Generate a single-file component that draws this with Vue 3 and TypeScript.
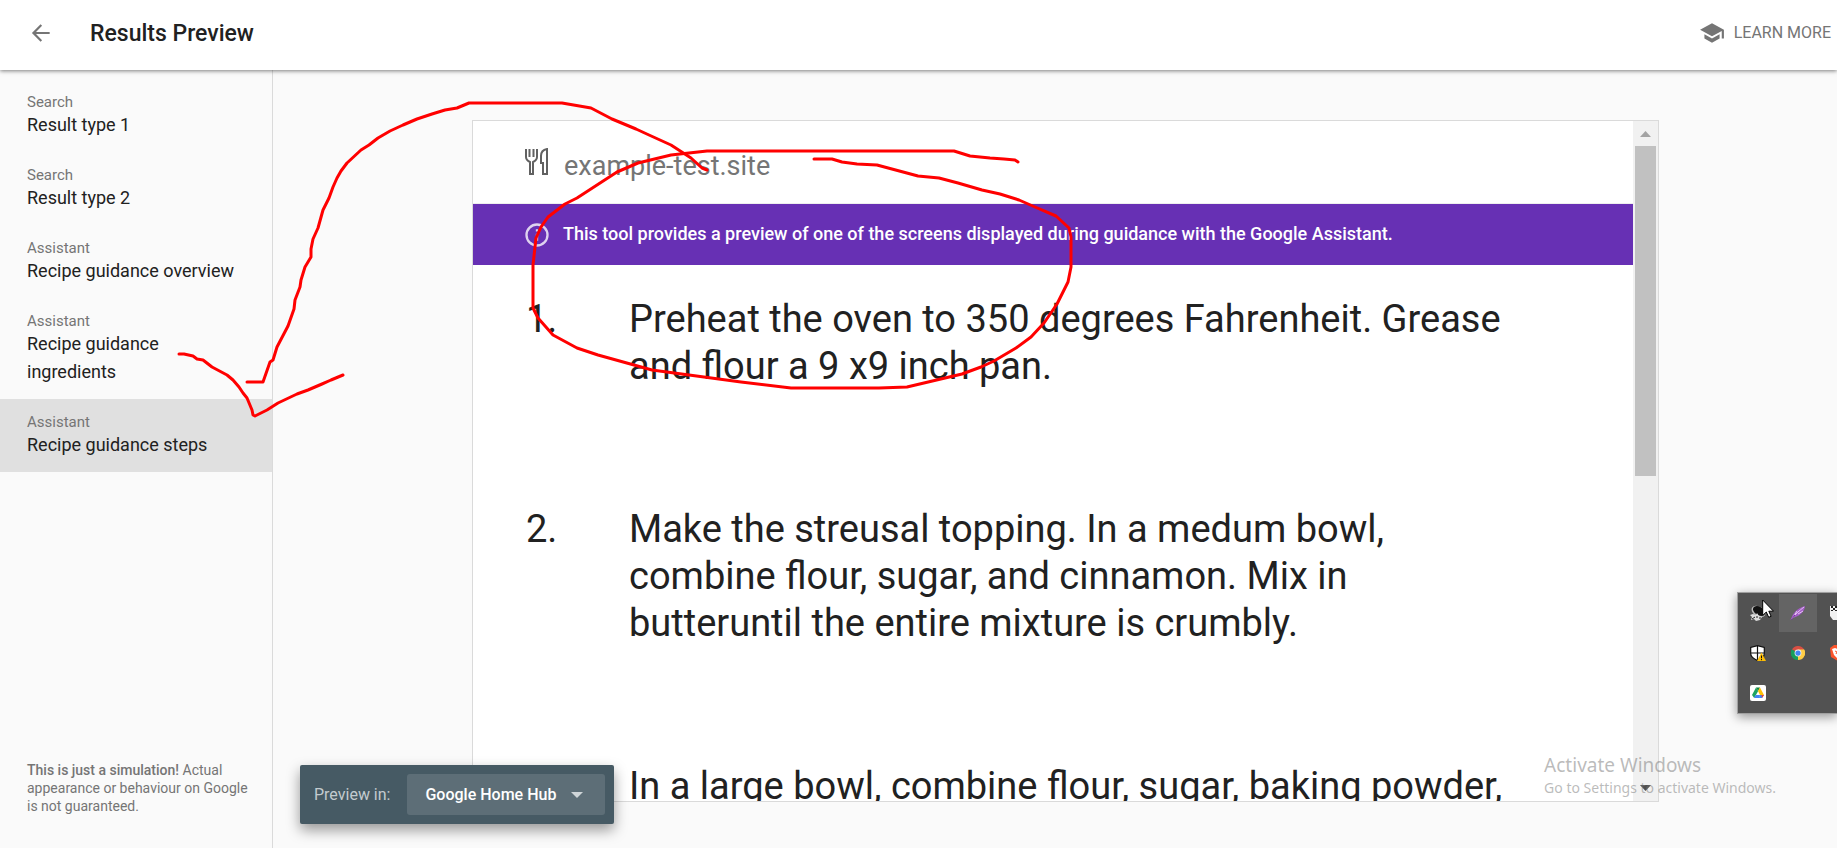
<script setup lang="ts">
import { ref } from 'vue'

interface ResultItem {
  source: string
  title: string
}

const results: ResultItem[] = [
  { source: 'Search', title: 'Result type 1' },
  { source: 'Search', title: 'Result type 2' },
  { source: 'Assistant', title: 'Recipe guidance overview' },
  { source: 'Assistant', title: 'Recipe guidance ingredients' },
  { source: 'Assistant', title: 'Recipe guidance steps' },
]

const selected = ref(4)
const device = ref('Google Home Hub')

const steps: string[] = [
  'Preheat the oven to 350 degrees Fahrenheit. Grease and flour a 9 x9 inch pan.',
  'Make the streusal topping. In a medum bowl, combine flour, sugar, and cinnamon. Mix in butteruntil the entire mixture is crumbly.',
  'In a large bowl, combine flour, sugar, baking powder,',
]

const strokes: string[] = [
  '247,382 263,382 270,362 273,360 277,347 288,326 294,309 295,300 300,287 301,280 305,267 311,257 311,249 313,239 318,228 323,210 329,198 333,187 337,178 341,171 347,163 361,150 369,145 378,138 390,131 403,125 417,119 432,114 445,110 457,108 469,103 562,103 591,108 612,119 636,129 649,135 671,145 691,158 702,168 707,170',
  '179,354 184,354 193,356 197,359 203,360 212,367 227,375 233,380 239,387 243,393 247,398 252,410 253,415 255,416 267,410 278,403 297,394 308,390 322,384 331,380 343,375',
  '814,159 832,159 842,162 857,164 877,165 918,176 939,178 958,183 982,190 1000,194 1019,200 1035,207 1056,216 1069,228 1071,237 1071,267 1068,282 1057,304 1044,323 1031,337 1016,348 994,361 981,367 962,374 907,387 879,388 791,388 741,382 652,370 598,355 577,348 553,335 538,318 533,308 533,265 536,238 541,227 548,217 565,204 577,198 617,172 638,163 671,155 707,151 930,151 954,151 970,156 990,158 1004,159 1015,160 1018,162',
]
</script>

<template>
  <div class="page">
    <header class="topbar">
      <button class="back" type="button" aria-label="Back">
        <svg viewBox="0 0 24 24" width="26" height="26"><path d="M20 11H7.4l5.6-5.6L11.6 4 3.6 12l8 8 1.4-1.4L7.4 13H20z" /></svg>
      </button>
      <h1>Results Preview</h1>
      <a class="learn" href="#">
        <svg viewBox="0 0 24 24" width="26" height="26"><path d="M5 13.18v4L12 21l7-3.82v-4L12 17l-7-3.82zM12 3 1 9l11 6 9-4.91V17h2V9L12 3z" /></svg>
        <span>LEARN MORE</span>
      </a>
    </header>

    <div class="body">
      <aside class="sidebar">
        <nav>
          <button
            v-for="(item, i) in results"
            :key="item.title"
            type="button"
            class="item"
            :class="{ active: i === selected }"
            @click="selected = i"
          >
            <span class="source">{{ item.source }}</span>
            <span class="title">{{ item.title }}</span>
          </button>
        </nav>
        <p class="note"><b>This is just a simulation!</b> Actual appearance or behaviour on Google is not guaranteed.</p>
      </aside>

      <main class="stage">
        <section class="card">
          <div class="content">
            <div class="site">
              <svg class="cutlery" viewBox="0 0 24 28" width="24" height="28">
                <path d="M1 1v8q0 3 4 5v12h3V14q4-2 4-5V1M4.500 1v8M8.500 1v8M22 1v25h-4V15h-2V8q0-6 6-7z" />
              </svg>
              <span>example-test.site</span>
            </div>
            <div class="banner">
              <svg viewBox="0 0 24 24" width="28" height="28"><path d="M11 7h2v2h-2zm0 4h2v6h-2zm1-9a10 10 0 1 0 0 20 10 10 0 0 0 0-20zm0 18a8 8 0 1 1 0-16 8 8 0 0 1 0 16z" /></svg>
              <span>This tool provides a preview of one of the screens displayed during guidance with the Google Assistant.</span>
            </div>
            <ol class="steps">
              <li v-for="(step, i) in steps" :key="i">
                <span class="num">{{ i + 1 }}.</span>
                <span>{{ step }}</span>
              </li>
            </ol>
          </div>
          <div class="scrollbar">
            <svg viewBox="0 0 11 6" width="11" height="6"><path d="M0 6 5.500 0 11 6z" fill="#a3a3a3" /></svg>
            <div class="thumb"></div>
            <svg viewBox="0 0 11 6" width="11" height="6"><path d="M0 0 5.500 6 11 0z" fill="#505050" /></svg>
          </div>
        </section>
      </main>
    </div>

    <div class="device-bar">
      <label for="device">Preview in:</label>
      <div class="picker">
        <select id="device" v-model="device">
          <option>Google Home Hub</option>
        </select>
        <svg viewBox="0 0 12 6" width="12" height="6"><path d="M0 0h12L6 6z" /></svg>
      </div>
    </div>

    <div class="watermark">
      <p class="big">Activate Windows</p>
      <p>Go to Settings to activate Windows.</p>
    </div>

    <svg class="ink" width="1100" height="430" viewBox="0 0 1100 430">
      <polyline v-for="(points, i) in strokes" :key="i" :points="points" />
    </svg>

    <div class="tray">
      <span class="cell">
        <svg viewBox="0 0 16 16" width="16" height="16">
          <ellipse cx="8.500" cy="6.500" rx="7.500" ry="5" transform="rotate(32 8.500 6.500)" fill="#bbb" />
          <ellipse cx="9" cy="6" rx="6.500" ry="4.200" transform="rotate(32 9 6)" fill="#111" />
          <path d="M3 9l3 1 1-2 2 3 3 1-2 3-4 1-2-2-3 1 1-3-2-2z" fill="#ddd" />
          <path d="M2 14l3-2M6 12h2M9 13h2" stroke="#222" />
        </svg>
      </span>
      <span class="cell hover">
        <svg viewBox="0 0 16 16" width="16" height="16">
          <path d="M1 15C2 9 7 3 15 1c0 5-5 10-12 12z" fill="#a45cc8" />
          <path d="M1 15C5 9 9 6 14 2M4 11l3-5M8 9l5-3" stroke="#e3c3f1" fill="none" stroke-width="1" />
          <path d="M1 15l4-5" stroke="#6d2c91" />
        </svg>
      </span>
      <span class="cell">
        <svg viewBox="0 0 16 16" width="16" height="16">
          <path d="M0 1h16v10l-3 4H3l-3-4z" fill="#f1f1f1" />
          <path d="M1 1h2v2H1zM5 1h2v2H5zM3 3h2v2H3zM7 3h2v2H7zM1 5h2v1H1zM5 5h2v1H5z" fill="#222" />
        </svg>
      </span>
      <span class="cell">
        <svg viewBox="0 0 16 16" width="16" height="16">
          <path d="M7.500.7 14.300 2.500v6q0 4-6.800 7-6.800-3-6.800-7v-6z" fill="#fff" stroke="#111" stroke-width="1.200" />
          <path d="M7.500 1v14M1 8h13" stroke="#111" stroke-width="1.200" />
          <path d="M11.500 7.500 16 16H7z" fill="#fbbc05" />
          <path d="M11.500 10.500v2.800M11.500 14v1.200" stroke="#111" />
        </svg>
      </span>
      <span class="cell">
        <svg viewBox="0 0 16 16" width="14" height="14">
          <path d="M8 8 1.070 4A8 8 0 0 1 14.930 4z" fill="#d94f43" />
          <path d="M8 8 8 16A8 8 0 0 1 1.070 4z" fill="#179e5d" />
          <path d="M8 8 14.930 4A8 8 0 0 1 8 16z" fill="#ffcd46" />
          <path d="M8 4h6.930a8 8 0 0 1-3.500 11.200L11.500 10z" fill="#ffcd46" />
          <path d="M1.070 4 4.500 10l3.500 2-2.200 3.700A8 8 0 0 1 1.070 4z" fill="#179e5d" />
          <circle cx="8" cy="8" r="3.900" fill="#f1f1f1" />
          <circle cx="8" cy="8" r="3" fill="#4285f4" />
        </svg>
      </span>
      <span class="cell">
        <svg viewBox="0 0 16 16" width="16" height="16">
          <path d="M4 0h8l4 3-1 9-7 4-7-4L0 3z" fill="#fb542b" />
          <path d="M2 4l3-1 3 1 3-1 3 1-2 6-4 4-4-4z" fill="#fff" />
          <path d="M5 6l2 1-1 2M11 6 9 7l1 2" stroke="#fb542b" fill="none" />
        </svg>
      </span>
      <span class="cell">
        <svg viewBox="0 0 16 16" width="16" height="16">
          <rect width="16" height="16" rx="2" fill="#fff" />
          <path d="M6 2.500 8.200 6 4.200 13 2 10z" fill="#1ea362" />
          <path d="M6 2.500h4L8.200 6z" fill="#11833f" />
          <path d="M10 2.500 14 10h-4L8 6z" fill="#ffc107" />
          <path d="M5.700 10H10l-.5 3H4z" fill="#4285f4" />
          <path d="M10 10h4l-2 3H9z" fill="#4285f4" />
          <path d="M11.500 10H14l-2 3z" fill="#ea4335" />
        </svg>
      </span>
      <svg class="cursor" viewBox="0 0 12 19" width="12" height="19">
        <path d="M.700 1v15.500l3.600-3.500 2.400 5.300 2.400-1-2.300-5.100h4.700z" fill="#fff" stroke="#000" />
      </svg>
    </div>
  </div>
</template>

<style>
body {
  margin: 0;
}
</style>

<style scoped>
.page {
  position: relative;
  display: flex;
  flex-direction: column;
  height: 100vh;
  overflow: hidden;
  background: #fafafa;
  color: #212121;
  font-family: Roboto, "Liberation Sans", sans-serif;
}

.topbar {
  display: flex;
  flex: none;
  align-items: center;
  z-index: 1;
  height: 70px;
  box-sizing: border-box;
  padding: 0 6px 4px 28px;
  background: #fff;
  box-shadow: 0 1px 4px rgba(0, 0, 0, 0.5);
}

.back {
  display: flex;
  padding: 0;
  border: 0;
  background: none;
  fill: #757575;
}

h1 {
  flex: 1;
  margin: 0 0 0 36px;
  font-size: 23px;
  font-weight: 500;
}

.learn {
  display: flex;
  align-items: center;
  gap: 9px;
  color: #757575;
  fill: #757575;
  font-size: 16px;
  text-decoration: none;
}

.learn span {
  padding-bottom: 2px;
}

.body {
  display: flex;
  flex: 1;
  min-height: 0;
}

.sidebar {
  display: flex;
  flex: none;
  flex-direction: column;
  justify-content: space-between;
  width: 272px;
  padding-top: 9px;
  border-right: 1px solid #dadada;
}

.item {
  display: block;
  width: 100%;
  padding: 14px 27px 13px;
  border: 0;
  background: none;
  color: inherit;
  font-family: inherit;
  text-align: left;
}

.item.active {
  background: #e0e0e0;
}

.source {
  display: block;
  color: #757575;
  font-size: 15px;
  line-height: 18px;
}

.title {
  display: block;
  font-size: 18px;
  line-height: 28px;
}

.note {
  margin: 0;
  padding: 0 20px 33px 27px;
  color: #757575;
  font-size: 14px;
  line-height: 18px;
}

.note b {
  font-weight: 500;
}

.stage {
  display: flex;
  flex: 1;
  min-width: 0;
  padding: 50px 178px 46px 199px;
}

.card {
  display: flex;
  flex: 1;
  min-width: 0;
  border: 1px solid #dadada;
  background: #fff;
}

.content {
  flex: 1;
  min-width: 0;
  overflow: hidden;
}

.site {
  display: flex;
  align-items: center;
  gap: 15px;
  height: 82px;
  padding-left: 52px;
  border-bottom: 1px solid #eee;
  color: #757575;
  font-size: 27px;
  line-height: 34px;
}

.site span {
  padding-top: 8px;
}

.cutlery {
  fill: none;
  stroke: #616161;
  stroke-width: 2;
}

.banner {
  display: flex;
  align-items: center;
  gap: 12px;
  height: 61px;
  padding-left: 50px;
  background: #6730b4;
  color: #fff;
  fill: #ded2ef;
  font-size: 18px;
  font-weight: 500;
}

.banner span {
  padding-bottom: 2px;
}

.steps {
  margin: 0;
  padding: 31px 118px 0 53px;
  list-style: none;
  font-size: 38px;
  line-height: 47px;
}

.steps li {
  display: flex;
  margin-bottom: 116px;
}

.num {
  flex: none;
  width: 103px;
}

.scrollbar {
  display: flex;
  flex: none;
  flex-direction: column;
  align-items: center;
  box-sizing: border-box;
  width: 25px;
  padding: 10px 0;
  background: #f1f1f1;
}

.thumb {
  width: 21px;
  height: 50%;
  margin: 9px 0 auto;
  background: #c1c1c1;
}

.device-bar {
  position: absolute;
  z-index: 2;
  left: 300px;
  bottom: 24px;
  display: flex;
  align-items: center;
  gap: 17px;
  padding: 9px 9px 9px 14px;
  border-radius: 2px;
  background: #465a64;
  box-shadow: 0 6px 14px rgba(0, 0, 0, 0.4);
  color: #c3cbcf;
  font-size: 16px;
}

.picker {
  display: flex;
  align-items: center;
  position: relative;
}

.picker svg {
  position: absolute;
  right: 22px;
  fill: #cfd5d8;
  pointer-events: none;
}

select {
  width: 198px;
  height: 41px;
  padding: 0 40px 0 18px;
  border: 0;
  border-radius: 3px;
  appearance: none;
  background: #5d6e77;
  color: #fff;
  font: 500 16px Roboto, sans-serif;
}

.watermark {
  position: absolute;
  z-index: 2;
  right: 61px;
  bottom: 50px;
  color: rgba(120, 120, 120, 0.5);
  font-family: "Noto Sans", "Open Sans", sans-serif;
  font-size: 14px;
  line-height: 20px;
}

.watermark p {
  margin: 0;
}

.watermark .big {
  font-size: 19px;
  line-height: 25px;
}

.ink {
  position: absolute;
  z-index: 3;
  top: 0;
  left: 0;
  fill: none;
  stroke: #f00;
  stroke-width: 3;
  stroke-linecap: round;
  stroke-linejoin: round;
  pointer-events: none;
}

.tray {
  position: absolute;
  z-index: 4;
  right: 0;
  bottom: 134px;
  display: grid;
  grid-template-columns: repeat(3, 38px);
  grid-auto-rows: 38px;
  gap: 2px;
  box-sizing: border-box;
  width: 100px;
  padding: 1px;
  border: 1px solid #a0a0a0;
  border-right: 0;
  background: #525252;
  box-shadow: 0 3px 10px rgba(0, 0, 0, 0.4);
}

.cell {
  display: flex;
  align-items: center;
  justify-content: center;
}

.cell.hover {
  background: #646464;
}

.cursor {
  position: absolute;
  top: 6px;
  left: 24px;
}
</style>
